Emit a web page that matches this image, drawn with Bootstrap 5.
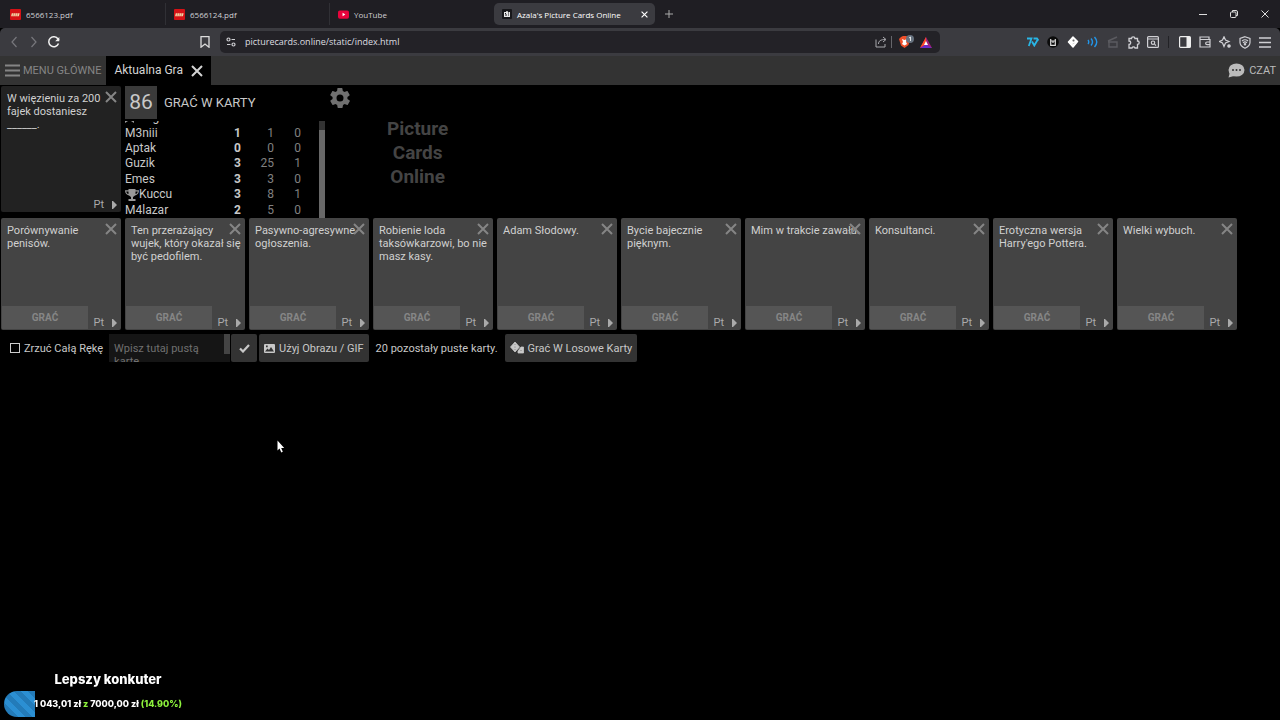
<!DOCTYPE html>
<html lang="pl" data-bs-theme="dark">
<head>
<meta charset="utf-8">
<meta name="viewport" content="width=device-width, initial-scale=1">
<title>Azala's Picture Cards Online</title>
<link href="https://cdn.jsdelivr.net/npm/bootstrap@5.3.0/dist/css/bootstrap.min.css" rel="stylesheet">
<style>
body{background:#000;color:#c8c8c8;font:11px/13px Roboto,sans-serif;min-height:100vh}
button{background:none;border:0;padding:0;color:inherit;font:inherit}
svg{display:block;flex:none}
.chrome-ui{font-family:"Open Sans","Noto Sans",sans-serif}
.tabstrip{background:#1f1e23;height:28px;padding-left:2px;font-size:8px;color:#d0d0d4}
.browser-tab{width:164px;height:22px;padding:0 8px;gap:5px;position:relative}
.browser-tab.divided{border-right:1px solid #303035}
.browser-tab.current{width:161px;background:#3b3b40;border-radius:5px;color:#fff;padding-right:7px}
.win-btn{width:31px;height:28px;display:grid;place-items:center}
.toolbar{background:#3b3b40;display:grid;grid-template-columns:minmax(0,11fr) minmax(0,36fr) minmax(0,17fr);height:28px;border-radius:5px 5px 0 0;color:#d0d0d4}
.nav-tools{padding:0 5px 0 4px}
.ext-tools{padding-right:5px}
.tool{width:20px;height:20px;display:grid;place-items:center}
.address{background:#232227;height:22px;border-radius:5px;padding:0 4px 0 6px;gap:0}
.address input{background:none;border:0;outline:0;color:#dedee0;font:9px/20px "Open Sans","Noto Sans",sans-serif;padding:0 0 0 1px}
.vline{width:1px;height:12px;background:#66666b}
.vline.dim{background:#222226;margin:0 6px 0 5px}
.gamebar{background:#333;height:29px;color:#bbb}
.gamebar .menu{color:#858585;padding:0 5px;gap:3px}
.gamebar .game{background:#000;padding:0 8px;gap:8px;color:#d4d4d4;font-size:12px}
.board{padding:1px 1px 0}
.playcard{width:120px;height:112px;background:#444;border-radius:2px;padding:6px 4px 6px 6px;position:relative;color:#d0d0d0}
.playcard.call{height:126px;background:#222}
.playcard p{margin:0}
.playcard .drop{position:absolute;right:4px;top:5px;color:#858585}
.playcard .lang{position:absolute;right:4px;bottom:1px;font-size:11px;gap:8px;color:#aaa}
.playcard .play{position:absolute;left:1px;bottom:1px;width:86px;height:23px;background:#555;color:#868686;font-size:10px;font-weight:700}
.status{width:234px}
.timer{width:32px;height:33px;background:#3a3a3a;font-size:21px;display:grid;place-items:center}
.phase{font-size:13px;margin-left:7px}
.gear{margin-right:7px;padding-bottom:9px}
.scores{height:97px;width:200px;margin-top:2px;overflow:hidden}
.scores table{width:176px;height:108px;flex:none;font-size:12px;table-layout:fixed}
.scores td{padding:0;line-height:15px}
.scores .pts{font-weight:700;text-align:right;width:28px}
.scores .num{color:#808080;text-align:right;width:33px}
.scores .last{width:27px}
.bar-track{width:6px;background:#333;padding-top:9px}
.bar-thumb{background:#686868;height:100%}
.brand{font-size:19px;line-height:24px;font-weight:700;color:#444;margin:31px 0 0 28px}
.controls{height:28px;margin-top:4px;padding-left:9px}
.controls .action{background:#333;border-radius:2px;height:28px;color:#c8c8c8}
.controls .confirm{width:26px;display:grid;place-items:center;margin:0 2px 0 1px}
.controls .wide{padding:0 5px;gap:4px}
.controls .left-note{margin:0 7px}
.controls label{margin:0 6px 0 4px}
.controls input{appearance:none;width:10px;height:10px;border:1px solid #ccc;margin:0;background:none}
.blank-box{width:121px;height:28px;background:#151515}
.blank-box textarea{resize:none;overflow:hidden;border:0;background:none;padding:8px 5px 0;width:115px;height:28px;font:11px/13px Roboto,sans-serif}
.blank-box textarea::placeholder{color:#707070}
.blank-box .thumb{width:6px;height:20px;background:#444}
.goal{left:4px;bottom:3px;font:800 9px/26px Inter,sans-serif;color:#fff;width:208px}
.goal h2{font:800 13px/16px Inter,sans-serif;margin:0 0 4px}
.goal .green{color:#8df23c}
.goal .fill{left:0;bottom:0;width:14.9%;height:26px;border-radius:13px 0 0 13px;background:repeating-linear-gradient(45deg,#2b8fd3 0 5px,#237bb9 5px 10px)}
.pointer{left:277px;top:440px}
</style>
</head>
<body>
<svg class="d-none">
<symbol id="cross" viewBox="0 0 12 12"><path d="M1 1l10 10M11 1L1 11" stroke="currentColor" stroke-width="2"/></symbol>
<symbol id="brick" viewBox="0 0 12 12"><rect width="12" height="12" rx="1" fill="#d51216"/><path d="M2 4.500h8.500l-.8 3.500H1.200z" fill="#f2d9a8"/><path d="M4 4.500L3.200 8M6.200 4.500L5.400 8M8.400 4.500L7.600 8" stroke="#d51216" stroke-width=".5"/></symbol>
<symbol id="tri" viewBox="0 0 5 8"><path d="M0 0h1l4 4-4 4H0z" fill="currentColor"/></symbol>
</svg>

<header class="chrome-ui">
<div class="tabstrip d-flex align-items-center">
<div class="browser-tab divided d-flex align-items-center"><svg width="11" height="11"><use href="#brick"/></svg>6566123.pdf</div>
<div class="browser-tab divided d-flex align-items-center"><svg width="11" height="11"><use href="#brick"/></svg>6566124.pdf</div>
<div class="browser-tab d-flex align-items-center"><svg width="11" height="11" viewBox="0 0 12 12"><rect y="1.5" width="12" height="9" rx="2" fill="#e8043c"/><path d="M5 4l3 2-3 2z" fill="#fff"/></svg><span>YouTube</span></div>
<div class="browser-tab current d-flex align-items-center"><svg width="10" height="10" viewBox="0 0 10 10"><rect width="10" height="10" rx="1" fill="#17171a"/><path d="M2 3h2v-.7h2V3h2v5H2z" fill="#e8e8e8"/><path d="M3 4l1 1v2M6 4h1M6 6h1" stroke="#17171a" fill="none"/></svg><span class="text-nowrap">Azala's Picture Cards Online</span><button class="ms-auto" aria-label="Zamknij kartę"><svg width="7" height="7"><use href="#cross"/></svg></button></div>
<button class="tool ms-1" aria-label="Nowa karta"><svg width="8" height="8" viewBox="0 0 8 8"><path d="M4 0v8M0 4h8" stroke="#aaa"/></svg></button>
<div class="d-flex ms-auto">
<button class="win-btn" aria-label="Minimalizuj"><svg width="8" height="8" viewBox="0 0 8 8"><path d="M0 4.5h8" stroke="#ddd"/></svg></button>
<button class="win-btn" aria-label="Przywróć"><svg width="8" height="8" viewBox="0 0 8 8" fill="none" stroke="#ddd"><rect x=".5" y="2" width="5.5" height="5.5" rx="1"/><path d="M2.5 2V.5H6A1.5 1.5 0 0 1 7.500 2v3.500H6"/></svg></button>
<button class="win-btn" aria-label="Zamknij"><svg width="8" height="8" viewBox="0 0 8 8"><path d="M.5.5l7 7M7.500.5l-7 7" stroke="#ddd"/></svg></button>
</div>
</div>

<div class="toolbar align-items-center">
<div class="nav-tools d-flex align-items-center">
<button class="tool" aria-label="Wstecz"><svg width="12" height="12" viewBox="0 0 12 12" fill="none" stroke="#77777c" stroke-width="1.200"><path d="M8.500 1L4 6l4.500 5"/></svg></button>
<button class="tool" aria-label="Dalej"><svg width="12" height="12" viewBox="0 0 12 12" fill="none" stroke="#77777c" stroke-width="1.200"><path d="M3.500 1L8 6l-4.500 5"/></svg></button>
<button class="tool" aria-label="Odśwież"><svg width="12" height="12" viewBox="0 0 12 12" fill="none" stroke="#f0f0f0" stroke-width="1.500"><path d="M10.500 7.500A5 5 0 1 1 10 3l1 1"/><path d="M11.300 1v4.200H7.200z" fill="#f0f0f0" stroke="none"/></svg></button>
<button class="tool ms-auto" aria-label="Zakładka"><svg width="10" height="12" viewBox="0 0 10 12" fill="none" stroke="#ddd" stroke-width="1.300"><path d="M1 .7h8v10.500L5 8l-4 3.200z"/></svg></button>
</div>
<div class="address d-flex align-items-center">
<svg class="me-2" width="10" height="10" viewBox="0 0 10 10" fill="none" stroke="#d0d0d4" stroke-width="1.200"><circle cx="2.500" cy="2.500" r="1.500"/><path d="M5.500 2.500H9M1 7.500h3.500"/><circle cx="7.500" cy="7.500" r="1.500"/></svg>
<input class="flex-grow-1" aria-label="Adres" value="picturecards.online/static/index.html">
<button class="tool" aria-label="Udostępnij"><svg width="12" height="12" viewBox="0 0 12 12" fill="none" stroke="#a8a8ad"><path d="M1 3.500V11h9V8M3.500 8c0-3 2-4.500 7-4.500M8 1l3 2.500L8 6"/></svg></button>
<span class="vline me-1"></span>
<button class="tool" aria-label="Tarcza Brave"><svg width="16" height="14" viewBox="0 0 16 14"><path d="M3 2l2-1h3l3 1 1 2-1.500 6L6.500 13 3 10.500 1 4z" fill="#f0502a"/><path d="M4 4l2.500 1L9 4 8 7l1 2-2.500 1.500L4 9l1-2z" fill="#fff"/><circle cx="12" cy="4" r="4" fill="#66717e"/><path d="M11 3l1.500-1v4" stroke="#fff" fill="none" stroke-width=".8"/></svg></button>
<button class="tool" aria-label="BAT"><svg width="12" height="11" viewBox="0 0 12 11"><path d="M6 0l6 11H0z" fill="#9e1f78"/><path d="M6 0L0 11l6-4z" fill="#ff4a25"/><path d="M0 11h12L6 7.500z" fill="#6a2ac8"/><path d="M6 4l2 4H4z" fill="#fff"/></svg></button>
</div>
<div class="ext-tools d-flex align-items-center justify-content-end">
<button class="tool" aria-label="7TV"><svg width="12" height="10" viewBox="0 0 12 10" fill="none" stroke="#29b6e6" stroke-width="1.800"><path d="M0 1.500h4.500L1.800 9M5 4.500L7.300 8.500 10.500 3M6.500 1.500h3.500l1.500 2"/></svg></button>
<button class="tool" aria-label="Rozszerzenie"><svg width="12" height="12" viewBox="0 0 12 12"><circle cx="6" cy="6" r="5.800" fill="#0b0b0b"/><path d="M3.700 3v6.300h4.600V3M3.700 5h4.600M6 5v2" fill="none" stroke="#ddd" stroke-width="1.200"/></svg></button>
<button class="tool" aria-label="Rozszerzenie kostka"><svg width="12" height="12" viewBox="0 0 12 12"><path d="M6 1L10.500 5.500 6 11 1.500 6z" fill="#fff" stroke="#fff" stroke-width="1.500" stroke-linejoin="round"/><path d="M5.500 4l1.500-.5.500 1.500-1.500.5zM5.500 8l2-1" fill="#555" stroke="#aaa" stroke-width=".5"/></svg></button>
<button class="tool" aria-label="Dźwięk"><svg width="12" height="12" viewBox="0 0 12 12" fill="none" stroke="#2396e8" stroke-width="1.400"><path d="M1 4q1.500 2 0 4M4 2.500q3 3.500 0 7M7.500 1q4.500 5 0 10"/></svg></button>
<button class="tool" aria-label="Klaps"><svg width="12" height="12" viewBox="0 0 12 12" fill="none" stroke="#5b5b60" stroke-width="1.400"><path d="M1 5l9-4M1 6h9v5H2V6"/></svg></button>
<button class="tool" aria-label="Rozszerzenia"><svg width="13" height="13" viewBox="0 0 13 13" fill="none" stroke="#d0d0d4" stroke-width="1.300"><path d="M2 2.500h2.500a1.700 1.700 0 0 1 3.400 0h2.600V5a1.700 1.700 0 0 1 0 3.400V12H8a1.600 1.600 0 0 0-3 0H2V8.500A1.700 1.700 0 0 0 2 5z"/></svg></button>
<button class="tool" aria-label="Szukaj w kartach"><svg width="12" height="12" viewBox="0 0 12 12" fill="none" stroke="#d0d0d4" stroke-width="1.200"><rect x=".6" y=".6" width="10.800" height="10.800" rx="1"/><path d="M1 3h10M7.500 8.200L9 9.700"/><circle cx="6" cy="6.700" r="1.700"/></svg></button>
<span class="vline dim"></span>
<button class="tool" aria-label="Panel boczny"><svg width="12" height="12" viewBox="0 0 12 12"><rect x=".6" y=".6" width="10.800" height="10.800" rx="1" fill="none" stroke="#eee" stroke-width="1.200"/><path d="M7.500 1H11v10H7.500z" fill="#eee"/></svg></button>
<button class="tool" aria-label="Portfel"><svg width="12" height="12" viewBox="0 0 12 12" fill="none" stroke="#d0d0d4" stroke-width="1.200"><path d="M10 3.500V1H1v10h10V3.500H1M11 6H8a1.200 1.200 0 0 0 0 2.700h3"/></svg></button>
<button class="tool" aria-label="Leo"><svg width="12" height="12" viewBox="0 0 12 12" fill="none" stroke="#d0d0d4" stroke-width="1.200"><path d="M5 .8L6.500 4 10 5.500 6.500 7 5 10.500 3.500 7 .5 5.500 3.500 4z"/><circle cx="10" cy="10" r="1.200" fill="#d0d0d4"/></svg></button>
<button class="tool" aria-label="VPN"><svg width="12" height="13" viewBox="0 0 12 13" fill="none" stroke="#d0d0d4" stroke-width="1.200"><path d="M6 .7l5 1.800v4Q11 10 6 12.300 1 10 1 6.500v-4z"/><path d="M3 5q3-2.500 6 0M4 6.700q2-1.500 4 0"/><circle cx="6" cy="8.200" r=".7"/></svg></button>
<button class="tool" aria-label="Menu"><svg width="12" height="11" viewBox="0 0 12 11"><path d="M0 1h12M0 5.500h12M0 10h12" stroke="#d0d0d4" stroke-width="1.300"/></svg></button>
</div>
</div>
</header>

<nav class="gamebar d-flex">
<button class="menu d-flex align-items-center"><svg width="15" height="13" viewBox="0 0 15 13"><path d="M0 1.500h15M0 6.500h15M0 11.500h15" stroke="currentColor" stroke-width="2.200"/></svg>MENU GŁÓWNE</button>
<button class="game d-flex align-items-center">Aktualna Gra<svg width="12" height="12"><use href="#cross"/></svg></button>
<button class="d-flex align-items-center gap-1 ms-auto pe-1"><svg width="17" height="15" viewBox="0 0 17 15"><ellipse cx="8.500" cy="7" rx="8" ry="6.600" fill="currentColor"/><path d="M2 9l-1.500 5.500L6 13z" fill="currentColor"/><g fill="#333"><circle cx="5" cy="7" r="1"/><circle cx="8.500" cy="7" r="1"/><circle cx="12" cy="7" r="1"/></g></svg>CZAT</button>
</nav>

<main class="board">
<section class="d-flex align-items-start">
<article class="playcard call"><p>W więzieniu za 200 fajek dostaniesz ______.</p><button class="drop" aria-label="Odrzuć"><svg width="12" height="12"><use href="#cross"/></svg></button><button class="lang d-flex align-items-center">Pt<svg width="5" height="8"><use href="#tri"/></svg></button></article>
<div class="status ms-1">
<div class="d-flex align-items-center">
<div class="timer">86</div>
<div class="phase">GRAĆ W KARTY</div>
<button class="gear ms-auto" aria-label="Ustawienia"><svg width="24" height="24" viewBox="0 0 24 24" fill="#707070"><path d="M19.400 13c.1-.7.1-1.300 0-2l2.100-1.600c.2-.2.2-.4.100-.6l-2-3.500c-.1-.2-.4-.3-.6-.2l-2.500 1c-.5-.4-1.100-.7-1.700-1l-.4-2.600c0-.3-.2-.5-.5-.5h-4c-.3 0-.4.200-.5.400L9.100 5.100c-.6.200-1.200.6-1.700 1l-2.500-1c-.2-.1-.5 0-.6.200l-2 3.500c-.1.200 0 .4.200.6L4.600 11c-.1.700-.1 1.300 0 2l-2.100 1.600c-.2.200-.2.400-.1.600l2 3.500c.1.200.4.300.6.200l2.500-1c.5.400 1.100.7 1.700 1l.4 2.600c0 .2.200.4.500.4h4c.3 0 .5-.2.500-.4l.4-2.600c.6-.3 1.200-.6 1.700-1l2.500 1c.2.100.5 0 .6-.2l2-3.500c.1-.2.100-.5-.1-.6zM12 15.500a3.500 3.500 0 1 1 0-7 3.500 3.500 0 0 1 0 7z"/></svg></button>
</div>
<div class="scores d-flex">
<div class="d-flex flex-column justify-content-end h-100 me-auto">
<table>
<tr><td><span class="d-flex align-items-center gap-1"><svg width="9" height="11" viewBox="0 0 9 11"><path d="M0 0h9v11L4.500 8 0 11z" fill="#999"/></svg>Angelika</span></td><td class="pts">1</td><td class="num">0</td><td class="num last">0</td></tr>
<tr><td>M3niii</td><td class="pts">1</td><td class="num">1</td><td class="num">0</td></tr>
<tr><td>Aptak</td><td class="pts">0</td><td class="num">0</td><td class="num">0</td></tr>
<tr><td>Guzik</td><td class="pts">3</td><td class="num">25</td><td class="num">1</td></tr>
<tr><td>Emes</td><td class="pts">3</td><td class="num">3</td><td class="num">0</td></tr>
<tr><td><span class="d-flex align-items-center"><svg width="14" height="12" viewBox="0 0 14 12"><path d="M3.500 0h7v1.300H14c0 3-1.500 4.700-4 5.200L8 8v2h2.500v2h-7v-2H6V8L4 6.500C1.500 6 0 4.300 0 1.300h3.500zM1.300 2.500c.2 1.300.9 2.200 2.200 2.600V2.500zm9.200 0v2.600c1.300-.4 2-1.300 2.200-2.600z" fill="#999"/></svg>Kuccu</span></td><td class="pts">3</td><td class="num">8</td><td class="num">1</td></tr>
<tr><td>M4lazar</td><td class="pts">2</td><td class="num">5</td><td class="num">0</td></tr>
</table>
</div>
<div class="bar-track"><div class="bar-thumb"></div></div>
</div>
</div>
<h1 class="brand text-center">Picture<br>Cards<br>Online</h1>
</section>

<section class="d-flex flex-wrap gap-1">
<article class="playcard"><p>Porównywanie penisów.</p><button class="drop" aria-label="Odrzuć"><svg width="12" height="12"><use href="#cross"/></svg></button><button class="play">GRAĆ</button><button class="lang d-flex align-items-center">Pt<svg width="5" height="8"><use href="#tri"/></svg></button></article>
<article class="playcard"><p>Ten przerażający wujek, który okazał się być pedofilem.</p><button class="drop" aria-label="Odrzuć"><svg width="12" height="12"><use href="#cross"/></svg></button><button class="play">GRAĆ</button><button class="lang d-flex align-items-center">Pt<svg width="5" height="8"><use href="#tri"/></svg></button></article>
<article class="playcard"><p>Pasywno-agresywne ogłoszenia.</p><button class="drop" aria-label="Odrzuć"><svg width="12" height="12"><use href="#cross"/></svg></button><button class="play">GRAĆ</button><button class="lang d-flex align-items-center">Pt<svg width="5" height="8"><use href="#tri"/></svg></button></article>
<article class="playcard"><p>Robienie loda taksówkarzowi, bo nie masz kasy.</p><button class="drop" aria-label="Odrzuć"><svg width="12" height="12"><use href="#cross"/></svg></button><button class="play">GRAĆ</button><button class="lang d-flex align-items-center">Pt<svg width="5" height="8"><use href="#tri"/></svg></button></article>
<article class="playcard"><p>Adam Słodowy.</p><button class="drop" aria-label="Odrzuć"><svg width="12" height="12"><use href="#cross"/></svg></button><button class="play">GRAĆ</button><button class="lang d-flex align-items-center">Pt<svg width="5" height="8"><use href="#tri"/></svg></button></article>
<article class="playcard"><p>Bycie bajecznie pięknym.</p><button class="drop" aria-label="Odrzuć"><svg width="12" height="12"><use href="#cross"/></svg></button><button class="play">GRAĆ</button><button class="lang d-flex align-items-center">Pt<svg width="5" height="8"><use href="#tri"/></svg></button></article>
<article class="playcard"><p>Mim w trakcie zawału.</p><button class="drop" aria-label="Odrzuć"><svg width="12" height="12"><use href="#cross"/></svg></button><button class="play">GRAĆ</button><button class="lang d-flex align-items-center">Pt<svg width="5" height="8"><use href="#tri"/></svg></button></article>
<article class="playcard"><p>Konsultanci.</p><button class="drop" aria-label="Odrzuć"><svg width="12" height="12"><use href="#cross"/></svg></button><button class="play">GRAĆ</button><button class="lang d-flex align-items-center">Pt<svg width="5" height="8"><use href="#tri"/></svg></button></article>
<article class="playcard"><p>Erotyczna wersja Harry'ego Pottera.</p><button class="drop" aria-label="Odrzuć"><svg width="12" height="12"><use href="#cross"/></svg></button><button class="play">GRAĆ</button><button class="lang d-flex align-items-center">Pt<svg width="5" height="8"><use href="#tri"/></svg></button></article>
<article class="playcard"><p>Wielki wybuch.</p><button class="drop" aria-label="Odrzuć"><svg width="12" height="12"><use href="#cross"/></svg></button><button class="play">GRAĆ</button><button class="lang d-flex align-items-center">Pt<svg width="5" height="8"><use href="#tri"/></svg></button></article>
</section>

<section class="controls d-flex align-items-center">
<input type="checkbox" id="discard"><label for="discard">Zrzuć Całą Rękę</label>
<div class="blank-box d-flex"><textarea aria-label="Pusta karta" placeholder="Wpisz tutaj pustą kartę"></textarea><span class="thumb"></span></div>
<button class="action confirm" aria-label="Zatwierdź"><svg width="11" height="9" viewBox="0 0 11 9"><path d="M1 4.500l3 3L10 1" fill="none" stroke="currentColor" stroke-width="2.200"/></svg></button>
<button class="action wide d-flex align-items-center"><svg width="11" height="9" viewBox="0 0 11 9"><path fill-rule="evenodd" d="M1 0h9a1 1 0 0 1 1 1v7a1 1 0 0 1-1 1H1a1 1 0 0 1-1-1V1a1 1 0 0 1 1-1zM1 7.500h9L7 3 5 6 3.500 4.500zM2 1.500v1.700h1.700V1.500z" fill="currentColor"/></svg>Użyj Obrazu / GIF</button>
<span class="left-note">20 pozostały puste karty.</span>
<button class="action wide d-flex align-items-center"><svg width="14" height="12" viewBox="0 0 14 12"><path d="M5 0l4.500 5L5 10 .5 5zM8 9l3-4h2.500v6H8z" fill="currentColor" stroke="currentColor" stroke-width=".8" stroke-linejoin="round"/><g fill="#777"><circle cx="5" cy="5" r=".6"/><circle cx="5" cy="2.500" r=".5"/><circle cx="5" cy="7.500" r=".5"/><circle cx="11" cy="8.500" r=".6"/></g></svg>Grać W Losowe Karty</button>
</section>
</main>

<aside class="goal position-fixed text-center">
<h2>Lepszy konkuter</h2>
<div class="fill position-absolute"></div>
<div class="position-relative text-nowrap">1 043,01 zł <span class="green">z</span> 7000,00 zł <span class="green">(14.90%)</span></div>
</aside>
<svg class="pointer position-fixed" width="8" height="13" viewBox="0 0 8 13"><path d="M.5.5v10l2-2 1.800 4 1.500-.7L4.200 8h3z" fill="#fff"/></svg>
<script src="https://cdn.jsdelivr.net/npm/bootstrap@5.3.0/dist/js/bootstrap.bundle.min.js"></script>
</body>
</html>
